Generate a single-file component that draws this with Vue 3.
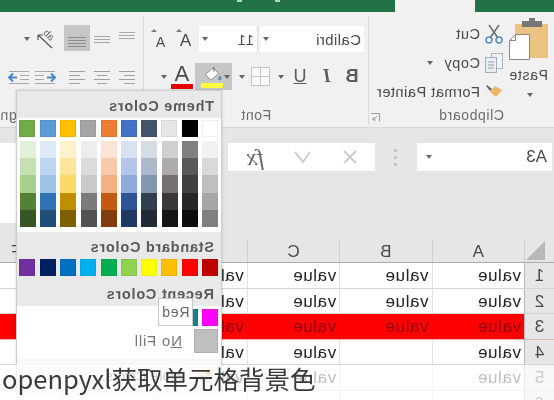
<script setup>
// 截图本身是水平翻转的，所以整个 Excel 界面放进 .mirror 里按正常方向布局
const themeTop = ['#ffffff', '#000000', '#e7e6e6', '#44546a', '#4472c4', '#ed7d31', '#a5a5a5', '#ffc000', '#5b9bd5', '#70ad47']
const themeShades = [
  ['#f2f2f2', '#d9d9d9', '#bfbfbf', '#a6a6a6', '#808080'],
  ['#808080', '#595959', '#404040', '#262626', '#0d0d0d'],
  ['#d0cece', '#aeabab', '#757171', '#3a3838', '#171616'],
  ['#d6dce4', '#adb9ca', '#8497b0', '#333f4f', '#222b35'],
  ['#d9e2f3', '#b4c6e7', '#8eaadb', '#2f5496', '#1f3864'],
  ['#fbe4d5', '#f7caac', '#f4b083', '#c45911', '#833c0b'],
  ['#ededed', '#dbdbdb', '#c9c9c9', '#7b7b7b', '#525252'],
  ['#fff2cc', '#ffe599', '#ffd966', '#bf8f00', '#7f6000'],
  ['#deeaf6', '#bdd6ee', '#9cc2e5', '#2e74b5', '#1f4e79'],
  ['#e2efd9', '#c5e0b3', '#a8d08d', '#538135', '#375623'],
]
const standard = ['#c00000', '#ff0000', '#ffc000', '#ffff00', '#92d050', '#00b050', '#00b0f0', '#0070c0', '#002060', '#7030a0']
const columns = ['A', 'B', 'C', 'D', 'E', 'F']
const rows = [
  { n: 1, cells: [1, 1, 1, 1] },
  { n: 2, cells: [1, 1, 1, 1] },
  { n: 3, cells: [1, 1, 1, 1], red: true },
  { n: 4, cells: [1, 0, 1, 1] },
  { n: 5, cells: [1, 0, 1, 1] },
  { n: 6, cells: [0, 0, 0, 0] },
]
// 对齐按钮用的横线：[x1, x2, y]
const lines = {
  top: [[2, 18, 3], [2, 18, 6], [2, 18, 9]],
  mid: [[2, 18, 7], [2, 18, 10], [2, 18, 13]],
  bottom: [[2, 20, 12], [2, 20, 15], [2, 20, 18], [2, 20, 21]],
  left: [[2, 18, 3], [2, 13, 7], [2, 18, 11], [2, 13, 15]],
  center: [[2, 18, 3], [5, 15, 7], [2, 18, 11], [5, 15, 15]],
  right: [[2, 18, 3], [7, 18, 7], [2, 18, 11], [7, 18, 15]],
}
</script>

<template>
  <div class="page">
    <div class="mirror">
      <div class="titlebar">
        <div class="green first"></div>
        <div class="tab"></div>
        <div class="green rest">
          <i class="mark"></i>
          <i class="mark"></i>
        </div>
      </div>

      <div class="ribbon">
        <section class="group clipboard">
          <div class="clip-body">
            <div class="paste">
              <svg width="40" height="42" viewBox="0 0 40 42">
                <rect x="0" y="6" width="33" height="34" fill="#ebc27f" />
                <rect x="6" y="3" width="20" height="6" fill="#777" />
                <rect x="13" y="0" width="6" height="4" fill="#777" />
                <path d="M18.5 16.5h14l6 6v19h-20z" fill="#fff" stroke="#8a8a8a" />
                <path d="M32.5 16.5v6h6" fill="none" stroke="#8a8a8a" />
              </svg>
              <span class="paste-label">Paste</span>
              <i class="arrow"></i>
            </div>
            <div class="clip-tools">
              <div class="clip-row">
                <svg width="20" height="20" viewBox="0 0 20 20">
                  <path d="M5 1l9 13M15 1L6 14" fill="none" stroke="#6e6e6e" stroke-width="1.6" />
                  <circle cx="5" cy="16" r="3" fill="none" stroke="#5b8fc4" stroke-width="1.6" />
                  <circle cx="15" cy="16" r="3" fill="none" stroke="#5b8fc4" stroke-width="1.6" />
                </svg>
                <span>Cut</span>
              </div>
              <div class="clip-row">
                <svg width="20" height="22" viewBox="0 0 20 22">
                  <rect x="1.5" y="1.5" width="11" height="15" fill="#f4f4f4" stroke="#a8b4bf" />
                  <rect x="7.5" y="5.5" width="11" height="15" fill="#e8eef4" stroke="#9fb0c0" />
                  <path d="M10 10h6M10 13h6M10 16h6" stroke="#a0a0a0" />
                </svg>
                <span>Copy</span>
                <i class="arrow small-gap"></i>
              </div>
              <div class="clip-row">
                <svg width="20" height="20" viewBox="0 0 20 20">
                  <path d="M2 8l7-4 5 6-6 5z" fill="#eeb565" />
                  <path d="M12 7l5-4 1 1-4 5z" fill="#666" />
                </svg>
                <span>Format Painter</span>
              </div>
            </div>
          </div>
          <div class="group-label clip-label">Clipboard</div>
          <svg class="launcher" width="9" height="9" viewBox="0 0 9 9">
            <path d="M.5 8.5v-8h8M3 3l4 4M7 4v3H4" fill="none" stroke="#999" />
          </svg>
        </section>

        <section class="group font">
          <div class="row first-row">
            <div class="field font-name">
              <span>Calibri</span>
              <i class="arrow"></i>
            </div>
            <div class="field font-size">
              <span>11</span>
              <i class="arrow"></i>
            </div>
            <div class="grow-a big">A</div>
            <div class="grow-a">A</div>
          </div>
          <div class="row second-row">
            <b class="tool t-b">B</b>
            <em class="tool t-i">I</em>
            <u class="tool t-u">U</u>
            <i class="arrow t-a1"></i>
            <svg class="t-border" width="19" height="19" viewBox="0 0 19 19">
              <path d="M.5.5h18v18H.5zM9.5.5v18M.5 9.5h18" fill="#fafafa" stroke="#c4c4c4" />
            </svg>
            <i class="arrow t-a2"></i>
            <div class="fill-btn">
              <i class="arrow"></i>
              <div class="bucket">
                <svg width="22" height="18" viewBox="0 0 22 18">
                  <path d="M10 2l8 7-6 6-8-7z" fill="#fff" stroke="#8a8a8a" />
                  <path d="M9 1v5" stroke="#666" />
                  <path d="M2 10c-2 3-1 5 1 5s2-3-1-5z" fill="#5b8fc4" />
                </svg>
                <span class="bar yellow"></span>
              </div>
            </div>
            <div class="font-color">
              <span class="letter">A</span>
              <span class="bar red"></span>
            </div>
            <i class="arrow t-a3"></i>
          </div>
          <div class="group-label">Font</div>
        </section>

        <section class="group align">
          <div class="row first-row">
            <svg class="a-1" width="20" height="20" viewBox="0 0 20 20"><path v-for="(l, i) in lines.top" :key="i" :d="`M${l[0]} ${l[2]}.5H${l[1]}`" stroke="#a8a8a8" /></svg>
            <svg class="a-2" width="20" height="20" viewBox="0 0 20 20"><path v-for="(l, i) in lines.mid" :key="i" :d="`M${l[0]} ${l[2]}.5H${l[1]}`" stroke="#a8a8a8" /></svg>
            <div class="a-sel">
              <svg width="22" height="24" viewBox="0 0 22 24"><path v-for="(l, i) in lines.bottom" :key="i" :d="`M${l[0]} ${l[2]}.5H${l[1]}`" stroke="#8c8c8c" /></svg>
            </div>
            <svg class="a-orient" width="26" height="22" viewBox="0 0 26 22">
              <path d="M6 20L20 7M20 7h-5M20 7v5" fill="none" stroke="#555" stroke-width="1.2" />
              <text x="5" y="11" transform="rotate(-45 9 9)" font-size="10" fill="#666">ab</text>
            </svg>
            <i class="arrow a-arrow"></i>
          </div>
          <div class="row second-row">
            <svg class="a-1" width="20" height="18" viewBox="0 0 20 18"><path v-for="(l, i) in lines.left" :key="i" :d="`M${l[0]} ${l[2]}.5H${l[1]}`" stroke="#a0a0a0" /></svg>
            <svg class="a-2" width="20" height="18" viewBox="0 0 20 18"><path v-for="(l, i) in lines.center" :key="i" :d="`M${l[0]} ${l[2]}.5H${l[1]}`" stroke="#a0a0a0" /></svg>
            <svg class="a-3" width="20" height="18" viewBox="0 0 20 18"><path v-for="(l, i) in lines.right" :key="i" :d="`M${l[0]} ${l[2]}.5H${l[1]}`" stroke="#a0a0a0" /></svg>
            <svg class="a-4" width="24" height="18" viewBox="0 0 24 18">
              <path d="M2 3.5h20M13 7.5h9M13 11.5h9M2 15.5h20" stroke="#a8a8a8" />
              <path d="M10 9.5H2M6 5.5l-4 4 4 4" fill="none" stroke="#4a86c5" stroke-width="2" />
            </svg>
            <svg class="a-5" width="24" height="18" viewBox="0 0 24 18">
              <path d="M2 3.5h20M2 7.5h9M2 11.5h9M2 15.5h20" stroke="#a8a8a8" />
              <path d="M14 9.5h8M18 5.5l4 4-4 4" fill="none" stroke="#4a86c5" stroke-width="2" />
            </svg>
          </div>
          <div class="group-label align-label">Alignment</div>
        </section>
      </div>

      <div class="formula">
        <div class="namebox">
          <span>A3</span>
          <i class="arrow"></i>
        </div>
        <div class="dots"><i></i><i></i><i></i></div>
        <div class="fx">
          <svg width="16" height="16" viewBox="0 0 16 16"><path d="M2 2l12 12M14 2L2 14" stroke="#cacaca" stroke-width="1.8" /></svg>
          <svg width="17" height="14" viewBox="0 0 17 14"><path d="M1 2l7 10 8-10" fill="none" stroke="#cacaca" stroke-width="1.8" /></svg>
          <em>fx</em>
        </div>
        <div class="input"></div>
      </div>

      <div class="sheet">
        <div class="head">
          <div class="corner"><span class="triangle"></span></div>
          <div v-for="c in columns" :key="c" class="col-head">{{ c }}</div>
        </div>
        <div v-for="r in rows" :key="r.n" class="data-row" :class="{ red: r.red }">
          <div class="row-head">{{ r.n }}</div>
          <div v-for="(c, i) in columns" :key="c" class="cell">
            <template v-if="r.cells[i]">value</template>
          </div>
        </div>
      </div>

      <!-- 颜色下拉菜单 -->
      <div class="picker">
        <div class="pop-head">Theme Colors</div>
        <div class="palette theme">
          <div class="swatches">
            <span v-for="c in themeTop" :key="c" class="sw" :style="{ background: c }"></span>
          </div>
          <div class="shades">
            <div v-for="(col, i) in themeShades" :key="i" class="shade-col">
              <span v-for="c in col" :key="c" :style="{ background: c }"></span>
            </div>
          </div>
        </div>
        <div class="pop-head std">Standard Colors</div>
        <div class="palette plain">
          <div class="swatches">
            <span v-for="c in standard" :key="c" class="sw" :style="{ background: c }"></span>
          </div>
        </div>
        <div class="pop-head recent">Recent Colors</div>
        <div class="recent-body">
          <div class="swatches">
            <span class="sw magenta"></span>
            <span class="sw teal"></span>
          </div>
          <div class="nofill">
            <span class="nofill-box"></span>
            <span><u>N</u>o Fill</span>
          </div>
        </div>
        <div class="more">
          <svg width="18" height="18" viewBox="0 0 18 18">
            <circle cx="9" cy="9" r="7" fill="#f1d9b8" />
            <circle cx="6" cy="6" r="2" fill="#e8793a" />
            <circle cx="12" cy="11" r="2.5" fill="#6aa7dc" />
          </svg>
          <span>More Colors...</span>
        </div>
        <div class="tooltip">Red</div>
      </div>
    </div>

    <div class="caption">openpyxl获取单元格背景色</div>
  </div>
</template>

<style scoped>
.page {
  position: relative;
  width: 554px;
  height: 400px;
  overflow: hidden;
  background: #fff;
  font-family: "Liberation Sans", Arial, sans-serif;
}
.mirror {
  position: relative;
  width: 554px;
  height: 400px;
  transform: scaleX(-1);
  filter: blur(0.35px);
  color: #4a4a4a;
}

/* 标题栏 */
.titlebar {
  display: flex;
  height: 12px;
}
.green {
  background: #217346;
}
.green.first {
  width: 79px;
}
.tab {
  width: 80px;
  background: #f1f1f1;
}
.green.rest {
  flex: 1;
  display: flex;
  gap: 33px;
  padding-left: 115px;
}
.mark {
  width: 5px;
  height: 2px;
  background: #b9d4c5;
}

/* 功能区 */
.ribbon {
  display: flex;
  height: 115px;
  background: #f1f1f1;
  border-bottom: 1px solid #d8d8d8;
}
.group {
  position: relative;
  display: flex;
  flex-direction: column;
  border-right: 1px solid #d9d9d9;
  margin: 4px 0 2px;
}
.clipboard {
  width: 185px;
}
.font {
  width: 224px;
}
.align {
  flex: 1;
  border-right: 0;
  overflow: hidden;
}
.group-label {
  margin-top: auto;
  height: 18px;
  line-height: 16px;
  text-align: center;
  font-size: 14px;
  letter-spacing: 0.6px;
  color: #6e6e6e;
}
.clip-label {
  width: 60px;
  margin-left: 50px;
}
.align-label {
  text-align: left;
  padding-left: 109px;
  white-space: nowrap;
}
.launcher {
  position: absolute;
  right: 0;
  bottom: 3px;
  margin-right: 2px;
}
.arrow {
  display: block;
  width: 0;
  height: 0;
  border: 3.5px solid transparent;
  border-top: 4px solid #666;
  border-bottom: 0;
}
.clip-body {
  display: flex;
}
.paste {
  width: 50px;
  padding: 0 0 0 6px;
  box-sizing: border-box;
  display: flex;
  flex-direction: column;
  font-size: 14px;
}
.paste svg {
  margin-top: 2px;
}
.paste-label {
  margin: 7px 0 10px;
  letter-spacing: 0.7px;
}
.paste .arrow {
  margin-left: 15px;
}
.clip-tools {
  padding-top: 3px;
  font-size: 14.5px;
  letter-spacing: 0.55px;
}
.clip-row {
  display: flex;
  align-items: center;
  gap: 4px;
  height: 29px;
  white-space: nowrap;
}
.small-gap {
  margin-left: 7px;
}
.row {
  display: flex;
  align-items: center;
}
.first-row {
  margin-top: 10px;
  height: 26px;
}
.second-row {
  margin-top: 11px;
  height: 27px;
}

/* 字体组 */
.field {
  display: flex;
  align-items: center;
  justify-content: space-between;
  height: 26px;
  background: #fff;
  font-size: 15px;
  box-sizing: border-box;
}
.font-name {
  width: 104px;
  margin-left: 4px;
  padding: 0 3px 0 3px;
  letter-spacing: 0.4px;
}
.font-size {
  width: 59px;
  margin-left: 2px;
  padding: 0 3px 0 3px;
  border-left: 1px solid #ddd;
  letter-spacing: 0.8px;
}
.grow-a {
  position: relative;
  width: 25px;
  text-align: center;
  font-size: 14px;
  padding-top: 6px;
}
.grow-a.big {
  font-size: 17px;
  margin-left: 1px;
  padding-top: 3px;
}
.grow-a::after {
  content: "";
  position: absolute;
  right: 3px;
  top: 1px;
  border: 3px solid transparent;
  border-bottom: 3px solid #777;
  border-top: 0;
}
.tool {
  text-align: center;
  font-size: 18px;
  color: #5a5a5a;
}
.t-b {
  width: 20px;
  margin-left: 6px;
}
.t-i {
  width: 30px;
  font-family: "Liberation Serif", serif;
  font-weight: bold;
}
.t-u {
  width: 24px;
}
.t-a1 {
  margin: 0 6px 0 4px;
}
.t-border {
  margin-left: 2px;
}
.t-a2 {
  margin: 0 7px 0 6px;
}
.fill-btn {
  display: flex;
  align-items: center;
  width: 37px;
  height: 27px;
  background: #c6c6c6;
  box-sizing: border-box;
  padding-left: 2px;
}
.bucket {
  display: flex;
  flex-direction: column;
  margin-left: 1px;
  margin-right: 4px;
}
.bucket svg {
  height: 17px;
}
.bar {
  display: block;
  height: 5px;
}
.bar.yellow {
  width: 22px;
  background: #ffff3c;
}
.font-color {
  width: 22px;
  margin-left: 2px;
  text-align: center;
}
.letter {
  display: block;
  font-size: 22px;
  line-height: 20px;
  color: #4a4a4a;
}
.bar.red {
  background: #e40000;
}
.t-a3 {
  margin-left: 4px;
}

/* 对齐组 */
.a-1 {
  margin-left: 6px;
}
.a-2 {
  margin-left: 5px;
}
.a-sel {
  display: flex;
  justify-content: center;
  width: 26px;
  height: 26px;
  margin: -2px 0 0 2px;
  background: #c6c6c6;
}
.a-orient {
  margin-left: 6px;
}
.a-arrow {
  margin-left: 2px;
}
.a-3 {
  margin-left: 5px;
}
.a-4 {
  margin-left: 10px;
}
.a-5 {
  margin-left: 2px;
}

/* 编辑栏 */
.formula {
  display: flex;
  align-items: flex-start;
  height: 112px;
  padding-top: 15px;
  box-sizing: border-box;
  background: #e6e6e6;
}
.namebox {
  display: flex;
  align-items: center;
  justify-content: space-between;
  width: 135px;
  height: 28px;
  margin-left: 2px;
  padding: 0 9px 0 5px;
  box-sizing: border-box;
  background: #fff;
  font-size: 17px;
}
.dots {
  display: flex;
  flex-direction: column;
  gap: 4px;
  width: 42px;
  padding-top: 6px;
  align-items: center;
  box-sizing: border-box;
}
.dots i {
  width: 3px;
  height: 3px;
  background: #c4c4c4;
}
.fx {
  display: flex;
  align-items: center;
  width: 147px;
  height: 28px;
  padding-left: 17px;
  box-sizing: border-box;
  background: #fff;
}
.fx svg + svg {
  margin-left: 31px;
}
.fx em {
  margin-left: 30px;
  font-family: "Liberation Serif", serif;
  font-size: 24px;
  color: #666;
}
.input {
  flex: 1;
  height: 80px;
  margin-left: 6px;
  background: #fff;
}

/* 表格 */
.sheet {
  font-size: 16px;
}
.head {
  display: flex;
  height: 22px;
  background: #e6e6e6;
  border-bottom: 1px solid #ababab;
}
.corner {
  width: 30px;
  flex: none;
  box-sizing: border-box;
  border-right: 1px solid #d0d0d0;
  padding: 1px 0 0 9px;
}
.triangle {
  display: block;
  width: 0;
  height: 0;
  border-bottom: 19px solid #b8b8b8;
  border-right: 19px solid transparent;
}
.col-head {
  flex: none;
  width: 92.4px;
  box-sizing: border-box;
  border-right: 1px solid #cfcfcf;
  text-align: center;
  font-size: 17px;
  line-height: 24px;
  color: #4a4a4a;
}
.data-row {
  display: flex;
  height: 25.5px;
  box-sizing: border-box;
  border-bottom: 1px solid #d4d4d4;
  background: #fff;
}
.row-head {
  flex: none;
  width: 30px;
  box-sizing: border-box;
  padding-top: 3px;
  text-align: center;
  font-size: 17px;
  background: #e6e6e6;
  border-right: 1px solid #b5b5b5;
}
.cell {
  flex: none;
  width: 92.4px;
  box-sizing: border-box;
  padding: 3px 0 0 3px;
  border-right: 1px solid #e2e2e2;
  font-size: 17px;
  letter-spacing: 0.6px;
  color: #222;
}
.data-row.red {
  border-bottom-color: #e5b5b5;
}
.data-row.red .cell {
  background: #fe0000;
  border-right-color: #fe0000;
  color: #8a0010;
}

/* 颜色菜单 */
.picker {
  position: absolute;
  left: 332px;
  top: 90px;
  width: 206px;
  height: 303px;
  box-sizing: border-box;
  background: #e9e9e9;
  border: 1px solid #cdcdcd;
  box-shadow: 0 0 3px rgba(0, 0, 0, 0.15);
}
.pop-head {
  height: 27px;
  padding-left: 7px;
  line-height: 30px;
  font-size: 14.5px;
  font-weight: bold;
  letter-spacing: 0.75px;
  color: #5a5a5a;
}
.palette {
  background: #fff;
  padding: 2px 3px 0;
}
.theme {
  height: 114px;
  box-sizing: border-box;
}
.plain {
  background: #e9e9e9;
  padding-top: 1px;
  height: 26px;
  box-sizing: border-box;
}
.pop-head.std {
  height: 26px;
}
.pop-head.recent {
  height: 22px;
  line-height: 20px;
}
.swatches {
  display: flex;
  gap: 4.3px;
}
.sw {
  width: 16px;
  height: 16.5px;
  flex: none;
  box-shadow: inset 0 0 0 1px rgba(0, 0, 0, 0.06);
}
.sw.magenta {
  background: #ff00ff;
}
.sw.teal {
  background: #17808a;
}
.shades {
  display: flex;
  gap: 4.3px;
  margin-top: 4px;
}
.shade-col {
  display: flex;
  flex-direction: column;
  width: 16px;
}
.shade-col span {
  height: 17.4px;
}
.recent-body {
  background: #fff;
  height: 53px;
  padding: 3px 3px 0;
  box-sizing: border-box;
}
.nofill {
  display: flex;
  align-items: center;
  gap: 12px;
  margin-top: 3px;
  font-size: 15px;
  letter-spacing: 0.8px;
  color: #777;
}
.nofill-box {
  width: 24px;
  height: 24px;
  background: #bfbfbf;
  border: 1px solid #b0b0b0;
  box-sizing: border-box;
}
.more {
  display: flex;
  align-items: center;
  gap: 14px;
  height: 34px;
  padding-left: 7px;
  background: #f8f8f8;
  font-size: 14px;
  color: #666;
}
.tooltip {
  position: absolute;
  left: 28px;
  top: 207px;
  width: 35px;
  height: 28px;
  line-height: 26px;
  box-sizing: border-box;
  text-align: center;
  background: #fff;
  border: 1px solid #c8c8c8;
  font-size: 14px;
  letter-spacing: 0.7px;
  color: #666;
}

/* 底部标题水印 */
.caption {
  position: absolute;
  left: 0;
  right: 0;
  bottom: 0;
  height: 35px;
  padding-left: 2px;
  line-height: 25px;
  background: rgba(255, 255, 255, 0.7);
  font-family: "Noto Sans CJK SC", "Noto Sans", sans-serif;
  font-size: 25.5px;
  color: #3a3a3a;
  white-space: nowrap;
}
</style>
